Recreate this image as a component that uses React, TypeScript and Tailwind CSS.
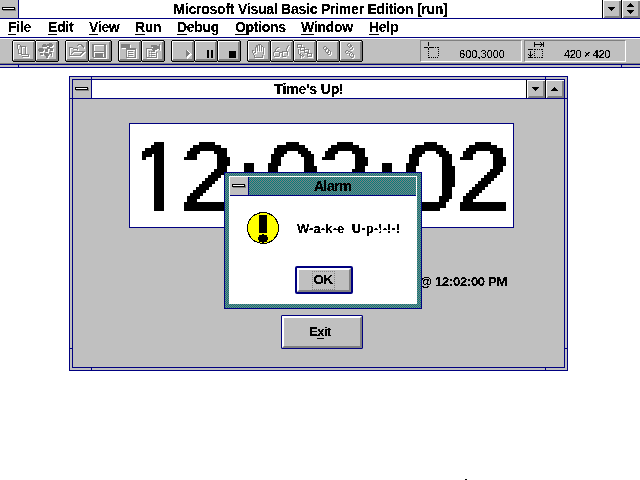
import React from "react";

const FONT = "font-['Liberation_Sans','Arial',sans-serif]";
const TEXT = "block whitespace-pre font-bold leading-[16px] [filter:url(#crisp)]";

function Filters() {
  return (
    <svg width="0" height="0" className="absolute">
      <filter id="crisp" x="0" y="0" width="1" height="1" colorInterpolationFilters="sRGB">
        <feComponentTransfer>
          <feFuncA type="discrete" tableValues="0 0 1 1 1" />
        </feComponentTransfer>
      </filter>
      <filter id="mosaic" x="0" y="0" width="1" height="1" colorInterpolationFilters="sRGB">
        <feFlood x="1" y="1" width="1" height="1" floodColor="#000" />
        <feComposite width="3" height="3" />
        <feTile result="grid" />
        <feComposite in="SourceGraphic" in2="grid" operator="in" />
        <feMorphology operator="dilate" radius="1" />
        <feComponentTransfer result="cells">
          <feFuncA type="discrete" tableValues="0 1" />
        </feComponentTransfer>
        <feOffset in="cells" dx="1" dy="0" result="wide" />
        <feMerge>
          <feMergeNode in="cells" />
          <feMergeNode in="wide" />
        </feMerge>
      </filter>
    </svg>
  );
}

function ControlBox() {
  return (
    <svg width="18" height="18" shapeRendering="crispEdges" className="block shrink-0 bg-[#c0c0c0]">
      <rect x="3" y="8" width="13" height="3" fill="#808080" />
      <rect x="2" y="7" width="13" height="3" fill="#000" />
      <rect x="3" y="8" width="11" height="1" fill="#fff" />
    </svg>
  );
}

function ArrowButton({ kind }: { kind: "down" | "up" | "both" }) {
  return (
    <svg width="18" height="18" shapeRendering="crispEdges" className="block shrink-0 bg-[#c0c0c0]">
      <path d="M0 0h18v1H0zM0 0h1v18H0z" fill="#fff" />
      <path d="M16 1h2v17H1v-1h1v-1h14z" fill="#808080" />
      {kind === "down" && <path d="M5 7h7v1h-1v1h-1v1h-1v1h-1v-1h-1v-1h-1v-1h-1z" fill="#000" />}
      {kind === "up" && <path d="M8 7h1v1h1v1h1v1h1v1H5v-1h1v-1h1v-1h1z" fill="#000" />}
      {kind === "both" && (
        <path d="M8 3h1v1h1v1h1v1h1v1H5v-1h1v-1h1v-1h1zM5 10h7v1h-1v1h-1v1h-1v1h-1v-1h-1v-1h-1v-1h-1z" fill="#000" />
      )}
    </svg>
  );
}

const ICONS = {
  form: "M5 4h3v1H5zM5 5h1v4H5zM6 9h1v5H6zM8 5h1v2H8zM9 6h5v1H9zM13 7h1v8h-1zM7 13h3v1H7zM9 7h1v8H9zM9 14h7v1H9zM10 16h7v1h-7zM16 14h1v3h-1z",
  module: "M8 4h3v1H8zM7 5h5v2H7zM14 3h3v1h1v2h-1v1h-3V6h-2V4h2zM12 7h3v2h-3zM4 8h4v1h1v2H8v1H4v-1H3V9h1zM10 9h3v3h-3zM15 8h3v3h-3zM5 13h3v2H5zM9 13h4v1h1v2h-4v-1H9zM14 12h3v2h-3zM11 16h2v2h-2zM16 14h1v2h-1z",
  open: "M4 7h4v1h5v2h-1V9H8V8H5v8H4zM5 15h1v-2h1v-1h1v-1h12v1h-1v1h-1v1h-1v1h-1v1H4v-1h11v-1h1v-1h1v-1H8v1H7v1H6v1zM12 5h1V4h4v1h1v1h1v2h-1V7h-1V6h-1V5h-3v1h-1z",
  save: "M4 4h14v14H5v-1H4zM6 5v6h10V5zM6 12v5h1v-4h8v4h1v-5z",
  menu: "M3 4h9v4H3zM8 8h10v10H8zM9 10v7h8v-7zM10 11h5v1h-5zM10 13h5v1h-5zM10 15h5v1h-5z",
  props: "M5 8h4v1H6v8h9v-5h1v6H5zM8 11h1v1H8zM10 11h4v1h-4zM8 13h1v1H8zM10 13h4v1h-4zM8 15h1v1H8zM10 15h4v1h-4zM10 5h6v1h2V4h1v6h-1V9h-2v1h-2v1h-2v-1h-1V9H9V8h3V7h-2z",
  hand: "M10 5h1v6h-1zM12 4h1v7h-1zM14 5h1v6h-1zM8 7h1v6H8zM16 7h1v7h-1zM9 5h1v2H9zM11 4h1v1h-1zM13 4h1v1h-1zM15 6h1v1h-1zM5 10h2v1H5zM5 11h1v2H5zM6 13h1v2H6zM7 12h1v1H7zM7 15h1v2h7v-2h1v3H7z",
  glasses: "M4 11h5v1H4zM3 12h1v4H3zM9 12h1v4H9zM4 16h5v1H4zM10 12h2v1h-2zM12 11h5v1h-5zM12 12h1v4h-1zM17 11h1v4h-1zM12 16h4v1h-4zM5 9h1v2H5zM6 8h1v1H6zM7 7h2v1H7zM16 8h1v3h-1zM17 6h1v2h-1zM18 5h1v1h-1z",
  calls: "M4 4h5v1H4zM4 5h1v3H4zM4 7h5v1H4zM8 4h1v4H8zM7 7h5v1H7zM7 8h1v3H7zM7 10h5v1H7zM11 7h1v4h-1zM11 9h5v1h-5zM11 10h1v3h-1zM11 12h5v1h-5zM15 9h1v4h-1zM14 13h5v1h-5zM14 14h1v3h-1zM14 16h5v1h-5zM18 13h1v4h-1zM5 9h1v5H5zM6 14h1v1H6zM7 13h1v5H7zM8 15h3v1H8zM9 17h1v-3H9z",
  step: "M8 6h2v1H8zM7 7h1v2H7zM8 9h2v1H8zM10 7h1v3h-1zM11 8h1v1h-1zM9 10h1v2H9zM10 12h1v1h-1zM12 9h1v3h-1zM11 12h1v2h-1zM12 14h2v1h-2zM13 10h1v1h-1zM14 11h1v3h-1zM12 12h1v1h-1z",
  proc: "M9 3h2v1H9zM8 4h1v2H8zM9 6h1v1H9zM11 4h1v3h-1zM10 7h1v1h-1zM12 5h1v2h-1zM13 7h1v2h-1zM11 9h2v1h-2zM7 10h2v1H7zM6 11h1v2H6zM7 13h2v1H7zM9 11h2v1H9zM11 12h2v1h-2zM10 13h1v3h-1zM11 16h1v1h-1zM12 17h2v1h-2zM13 13h1v1h-1zM14 14h1v3h-1zM12 14h1v1h-1z",
};

function ToolButton({ icon, children }: { icon?: keyof typeof ICONS; children?: React.ReactNode }) {
  return (
    <svg width="24" height="22" shapeRendering="crispEdges" className="-mr-px block shrink-0">
      <path d="M1 0h22v1h1v20h-1v1H1v-1H0V1h1z" fill="#000" />
      <rect x="1" y="1" width="22" height="20" fill="#808080" />
      <path d="M1 1h21v1H2v18H1z" fill="#fff" />
      <rect x="2" y="2" width="19" height="17" fill="#c0c0c0" />
      {icon && <path d={ICONS[icon]} fill="#fff" transform="translate(1 1)" />}
      {icon && <path d={ICONS[icon]} fill="#808080" />}
      {children}
    </svg>
  );
}

const PANEL =
  "flex h-[22px] w-[102px] items-end justify-end border border-t-[#808080] border-r-white border-b-white border-l-[#808080]";

function Toolbar() {
  return (
    <div className="flex h-[26px] items-start border-t border-b border-t-white border-b-[#808080] bg-[#c0c0c0] pt-px pl-3">
      <div className="mr-[7px] flex"><ToolButton icon="form" /><ToolButton icon="module" /></div>
      <div className="mr-[7px] flex"><ToolButton icon="open" /><ToolButton icon="save" /></div>
      <div className="mr-[7px] flex"><ToolButton icon="menu" /><ToolButton icon="props" /></div>
      <div className="mr-[7px] flex">
        <ToolButton>
          <path d="M16 10l5 5-5 4z" fill="#fff" />
          <path d="M15 10h1v1h1v1h1v1h1v1h-1v1h-1v1h-1v1h-1z" fill="#808080" />
        </ToolButton>
        <ToolButton><path d="M13 10h2v8h-2zM17 10h2v8h-2z" fill="#000" /></ToolButton>
        <ToolButton><path d="M12 11h7v7h-7z" fill="#000" /></ToolButton>
      </div>
      <div className="flex">
        <ToolButton icon="hand" /><ToolButton icon="glasses" /><ToolButton icon="calls" /><ToolButton icon="step" /><ToolButton icon="proc" />
      </div>
      <div className={`ml-[58px] ${PANEL}`}>
        <svg width="17" height="17" shapeRendering="crispEdges" className="mr-auto mb-[2px] ml-[3px] block">
          <path d="M0 5.5h4M5 5.5h4M4.500 0v4M4.500 6v2" stroke="#000" />
          <path d="M9 5.500h6M5 15.500h10M4.500 7v9M14.500 5v10" stroke="#000" strokeDasharray="1 1" />
        </svg>
        <span className="mr-[16px] block text-[11px] leading-[13px] [filter:url(#crisp)]">600,3000</span>
      </div>
      <div className={`ml-[2px] ${PANEL}`}>
        <svg width="17" height="17" shapeRendering="crispEdges" className="mr-auto mb-[2px] ml-[3px] block">
          <path d="M0 7.500h5M6.500 0v5M15.500 0v5M7 2.500h8M13.500 1v3M12.500 0v1M12.500 4v1M2.500 9v7M0 15.500h5M1 13.500h3M0 12.500h1M4 12.500h1" stroke="#000" />
          <path d="M7 7.500h8M7 15.500h8M6.500 7v9M14.500 7v9" stroke="#000" strokeDasharray="1 1" />
        </svg>
        <span className="mr-[15px] block text-[11px] leading-[13px] tracking-[-0.35px] [filter:url(#crisp)]">420 × 420</span>
      </div>
    </div>
  );
}

const MENUS = [
  { name: "File", w: "w-[40px]" },
  { name: "Edit", w: "w-[41px]" },
  { name: "View", w: "w-[46px]" },
  { name: "Run", w: "w-[42px]" },
  { name: "Debug", w: "w-[58px]" },
  { name: "Options", w: "w-[66px]" },
  { name: "Window", w: "w-[68px]" },
  { name: "Help", w: "w-[40px]" },
];

function TimesUpWindow() {
  return (
    <div className="absolute top-[76px] left-[69px] h-[295px] w-[499px] border border-[#000080] bg-[#c0c0c0]">
      <svg width="497" height="293" shapeRendering="crispEdges" className="absolute top-0 left-0">
        <path d="M21.500 0v3M475.500 0v3M21.500 290v3M475.500 290v3M0 21.500h3M0 271.500h3M494 21.500h3M494 271.500h3" stroke="#000080" />
      </svg>
      <div className="relative m-[2px] h-[289px] border border-[#000080]">
        <div className="flex h-[19px] border-b border-[#000080] bg-white">
          <ControlBox />
          <div className="h-[18px] w-px bg-[#000080]" />
          <div className="flex flex-1 justify-center pt-px"><span className={`${TEXT} text-[14px] tracking-[-0.15px]`}>Time's Up!</span></div>
          <div className="h-[18px] w-px bg-black" />
          <ArrowButton kind="down" />
          <div className="h-[18px] w-px bg-black" />
          <ArrowButton kind="up" />
        </div>
        <div className="mt-[24px] ml-[56px] h-[105px] w-[385px] border border-[#000080] bg-white">
          <div className="flex h-[103px] w-[383px] text-[96px] leading-[106px] whitespace-pre [-webkit-text-stroke:1.2px_black] [filter:url(#mosaic)]">
            <span className="block h-[106px] w-[50px] [clip-path:polygon(13px_0,34px_0,34px_100%,24px_100%,24px_70px,13px_70px)]">1</span>
            <span className="tracking-[2.3px]">2</span>
            <span className="mt-[3px] tracking-[2.6px]">:</span>
            <span className="tracking-[-0.4px]">0</span>
            <span className="tracking-[2.3px]">2</span>
            <span className="mt-[3px] tracking-[2.6px]">:</span>
            <span className="tracking-[-0.4px]">0</span>
            <span>2</span>
          </div>
        </div>
        <div className="mt-[46px] flex justify-end pr-[57px]"><span className={`${TEXT} text-[13px] tracking-[-0.3px]`}>@ 12:02:00 PM</span></div>
        <div className="mt-[25px] ml-[208px] h-[34px] w-[82px] rounded-[1px] border border-[#000080] bg-[#c0c0c0]">
          <div className="flex h-full w-full justify-center border-2 border-t-white border-r-[#808080] border-b-[#808080] border-l-white pt-[6px] pr-[4px]">
            <span className={`${TEXT} text-[13px] tracking-[-0.6px]`}>E<u className="underline-offset-[2px]">x</u>it</span>
          </div>
        </div>
      </div>
    </div>
  );
}

function AlarmDialog() {
  return (
    <div className="absolute top-[172px] left-[224px] h-[137px] w-[198px] border border-[#000080]">
      <svg width="196" height="135" shapeRendering="crispEdges" className="absolute top-0 left-0">
        <pattern id="dither" width="2" height="2" patternUnits="userSpaceOnUse">
          <rect width="2" height="2" fill="#808080" />
          <path d="M0 0h1v1H0zM1 1h1v1H1z" fill="#008080" />
        </pattern>
        <rect width="196" height="135" fill="url(#dither)" />
      </svg>
      <div className="relative mt-[3px] ml-[4px] flex h-[128px] w-[188px] flex-col border border-white">
        <div className="flex h-[19px] shrink-0 border-b border-[#000080]">
          <ControlBox />
          <div className="h-[18px] w-px bg-[#000080]" />
          <div className="flex flex-1 justify-center pt-px"><span className={`${TEXT} text-[14px] tracking-[-0.5px]`}>Alarm</span></div>
        </div>
        <div className="flex-1 bg-white pt-4">
          <div className="ml-[17px] flex items-center">
            <svg width="32" height="33" className="block">
              <circle cx="16" cy="16" r="15.500" fill="#ff0" stroke="#000" shapeRendering="crispEdges" />
              <path d="M12 3h8v18h-8zM15 22h2v1h3v2h1v3h-1v2h-3v1h-2v-1h-3v-2h-1v-3h1v-2h3z" fill="#000" shapeRendering="crispEdges" />
            </svg>
            <span className={`${TEXT} ml-[18px] text-[13px] tracking-[0.1px]`}>W-a-k-e  U-p-!-!-!</span>
          </div>
          <div className="mt-[21px] ml-[65px] h-[28px] w-[58px] rounded-[2px] border-2 border-[#000080] bg-[#c0c0c0]">
            <div className="flex h-full w-full items-center justify-center border-2 border-t-white border-r-[#808080] border-b-[#808080] border-l-white pr-[2px]">
              <span className="flex h-[19px] w-[23px] items-center justify-center border border-dotted border-[#808080]"><span className={`${TEXT} text-[13.5px] tracking-[-0.5px]`}>OK</span></span>
            </div>
          </div>
        </div>
      </div>
    </div>
  );
}

export default function App() {
  return (
    <div className={`relative h-[480px] w-[640px] overflow-hidden bg-white text-black ${FONT}`}>
      <Filters />
      <div className="flex h-[19px] border-b border-[#000080]">
        <ControlBox />
        <div className="h-[18px] w-px bg-[#000080]" />
        <div className="flex flex-1 justify-center pt-px"><span className={`${TEXT} text-[14px] tracking-[-0.24px]`}>Microsoft Visual Basic Primer Edition [run]</span></div>
        <div className="h-[18px] w-px bg-black" />
        <ArrowButton kind="down" />
        <div className="h-[18px] w-px bg-black" />
        <ArrowButton kind="both" />
      </div>
      <div className="flex h-[19px] border-b border-[#000080] pl-2">
        {MENUS.map((m) => (
          <div key={m.name} className={`${m.w} shrink-0`}>
            <span className={`${TEXT} text-[14px] tracking-[-0.3px]`}><u className="underline-offset-[2px]">{m.name[0]}</u>{m.name.slice(1)}</span>
          </div>
        ))}
      </div>
      <Toolbar />
      <div className="flex h-1 justify-between border-y border-[#000080] bg-[#c0c0c0] pr-[18px] pl-[18px]">
        <div className="w-px bg-[#000080]" />
        <div className="w-px bg-[#000080]" />
      </div>
      <TimesUpWindow />
      <AlarmDialog />
      <div className="absolute top-[479px] left-[465px] h-px w-[2px] bg-black" />
    </div>
  );
}
